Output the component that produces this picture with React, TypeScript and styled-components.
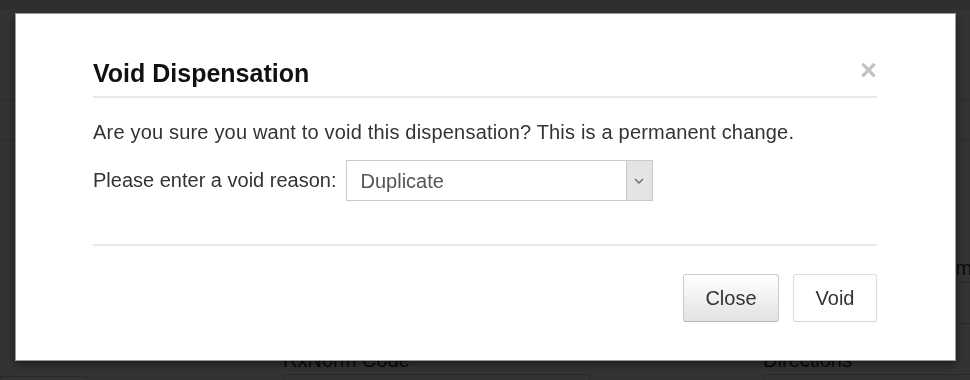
import styled, { createGlobalStyle } from "styled-components";

const GlobalStyle = createGlobalStyle`
  html, body {
    margin: 0;
    padding: 0;
    background: #fff;
    font-family: "Liberation Sans", Arial, sans-serif;
    color: #333;
  }
  * { box-sizing: border-box; }
`;

/* ---------- page under the backdrop ---------- */

const Page = styled.div`
  width: 970px;
  height: 380px;
  overflow: hidden;
  background: #fff;
`;

const TopStripe = styled.div`
  height: 10px;
  background: #ececec;
`;

const NavBar = styled.div`
  height: 91px;
  border-bottom: 1px solid #d4d4d4;
`;

const SubBar = styled.div`
  height: 40px;
  border-bottom: 1px solid #d4d4d4;
`;

const Form = styled.div`
  display: grid;
  grid-template-columns: 283px 480px 1fr;
  row-gap: 24px;
  padding-top: 115px;
`;

const Field = styled.div<{ $width?: number }>`
  display: flex;
  flex-direction: column;
  width: ${(p) => (p.$width ? `${p.$width}px` : "auto")};
  white-space: nowrap;
`;

const FieldLabel = styled.label<{ $indent?: number }>`
  font-size: 20px;
  line-height: 24px;
  margin-bottom: 2px;
  padding-left: ${(p) => p.$indent ?? 0}px;
  color: #333;
`;

const FieldInput = styled.div<{ $drop?: number }>`
  height: 42px;
  margin-top: ${(p) => p.$drop ?? 0}px;
  border: 1px solid #cfcfcf;
  border-radius: 2px;
`;

/* ---------- modal ---------- */

const Backdrop = styled.div`
  position: fixed;
  inset: 0;
  background: rgba(0, 0, 0, 0.8);
  padding: 13px 0 0 15px;
`;

const Modal = styled.div`
  width: 941px;
  height: 348px;
  background: #fff;
  border: 1px solid #9a9a9a;
  box-shadow: 0 3px 9px rgba(0, 0, 0, 0.5);
  padding: 44px 78px 0 77px;
`;

const Header = styled.div`
  display: flex;
  justify-content: space-between;
  align-items: flex-start;
  padding-bottom: 8px;
  border-bottom: 2px solid #e8e8e8;
`;

const Title = styled.h4`
  margin: 0;
  font-size: 25px;
  line-height: 30px;
  font-weight: 700;
  color: #111;
`;

const CloseX = styled.button`
  margin-top: -2px;
  padding: 0;
  border: 0;
  background: none;
  font-family: "Liberation Sans", Arial, sans-serif;
  font-size: 29px;
  line-height: 1;
  font-weight: 700;
  color: #c2c2c2;
  cursor: pointer;
`;

const Message = styled.p`
  margin: 20px 0 14px;
  font-size: 20px;
  line-height: 28px;
  letter-spacing: 0.19px;
  color: #333;
`;

const ReasonRow = styled.div`
  display: flex;
  align-items: center;
  gap: 9px;
  font-size: 20px;
  color: #333;
`;

const SelectBox = styled.div`
  display: flex;
  width: 307px;
  height: 41px;
  border: 1px solid #cacaca;
  background: #fff;
`;

const SelectValue = styled.span`
  flex: 1;
  padding: 1px 0 0 14px;
  font-size: 20px;
  line-height: 38px;
  color: #555;
`;

const SelectArrow = styled.span`
  width: 26px;
  display: flex;
  align-items: center;
  justify-content: center;
  background: #e4e4e4;
  border-left: 1px solid #c8c8c8;
`;

const Footer = styled.div`
  margin-top: 43px;
  padding-top: 28px;
  border-top: 2px solid #e8e8e8;
  display: flex;
  justify-content: flex-end;
  gap: 14px;
`;

const Button = styled.button<{ $plain?: boolean }>`
  height: 48px;
  padding: 0 21.5px;
  font-family: "Liberation Sans", Arial, sans-serif;
  font-size: 20px;
  color: #333;
  border-radius: 3px;
  border: 1px solid ${(p) => (p.$plain ? "#dcdcdc" : "#cbcbcb")};
  border-bottom-color: ${(p) => (p.$plain ? "#d4d4d4" : "#b8b8b8")};
  background: ${(p) =>
    p.$plain ? "#fff" : "linear-gradient(to bottom, #ffffff 0%, #e2e2e2 100%)"};
  cursor: pointer;
`;

export default function App() {
  return (
    <>
      <GlobalStyle />
      <Page>
        <TopStripe />
        <NavBar />
        <SubBar />
        <Form>
          <span />
          <span />
          <Field>
            <FieldLabel $indent={8}>Medication Dose Form</FieldLabel>
            <FieldInput />
          </Field>
          <Field $width={87}>
            <FieldInput $drop={28} />
          </Field>
          <Field $width={307}>
            <FieldLabel>RxNorm Code</FieldLabel>
            <FieldInput />
          </Field>
          <Field>
            <FieldLabel>Directions</FieldLabel>
            <FieldInput />
          </Field>
        </Form>
      </Page>
      <Backdrop>
        <Modal role="dialog" aria-labelledby="void-title">
          <Header>
            <Title id="void-title">Void Dispensation</Title>
            <CloseX aria-label="Close">×</CloseX>
          </Header>
          <Message>
            Are you sure you want to void this dispensation? This is a permanent change.
          </Message>
          <ReasonRow>
            <span>Please enter a void reason:</span>
            <SelectBox>
              <SelectValue>Duplicate</SelectValue>
              <SelectArrow>
                <svg width="10" height="6" viewBox="0 0 10 6" fill="none">
                  <path d="M1 1l4 4 4-4" stroke="#6a6a6a" strokeWidth="1.3" />
                </svg>
              </SelectArrow>
            </SelectBox>
          </ReasonRow>
          <Footer>
            <Button>Close</Button>
            <Button $plain>Void</Button>
          </Footer>
        </Modal>
      </Backdrop>
    </>
  );
}
